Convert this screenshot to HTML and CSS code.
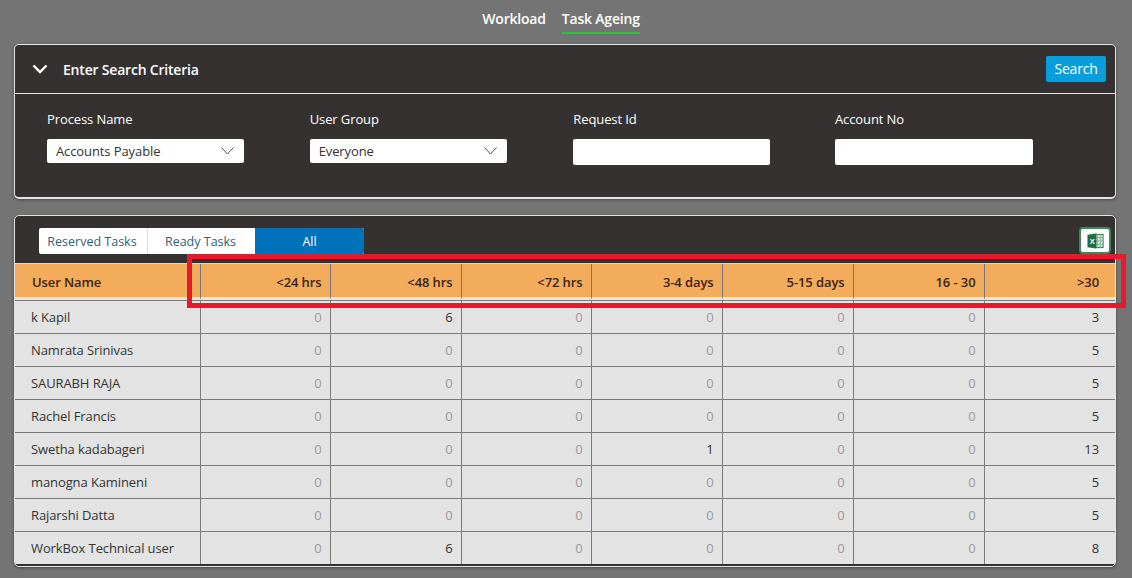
FILE: index.html
```html
<!DOCTYPE html>
<html lang="en">
<head>
  <meta charset="UTF-8">
  <title>Task Ageing</title>
  <link rel="stylesheet" href="styles.css">
</head>
<body>
<div class="page">
  <!-- top tabs -->
  <nav class="top-tabs">
    <a class="top-tab">Workload</a>
    <a class="top-tab active">Task Ageing</a>
  </nav>

  <!-- search panel -->
  <section class="panel search-panel">
    <div class="search-head">
      <svg class="collapse-icon" width="16" height="10" viewBox="0 0 16 10"><path d="M1.5 1.5 L8 8 L14.5 1.5" fill="none" stroke="#fff" stroke-width="2.4"/></svg>
      <h2>Enter Search Criteria</h2>
      <button class="search-btn">Search</button>
    </div>
    <div class="search-fields">
      <div class="field">
        <label>Process Name</label>
        <div class="select">Accounts Payable
          <svg width="13" height="8" viewBox="0 0 13 8"><path d="M0.5 0.5 L6.5 7 L12.5 0.5" fill="none" stroke="#555" stroke-width="1"/></svg>
        </div>
      </div>
      <div class="field">
        <label>User Group</label>
        <div class="select">Everyone
          <svg width="13" height="8" viewBox="0 0 13 8"><path d="M0.5 0.5 L6.5 7 L12.5 0.5" fill="none" stroke="#555" stroke-width="1"/></svg>
        </div>
      </div>
      <div class="field">
        <label>Request Id</label>
        <input type="text" class="text-input">
      </div>
      <div class="field">
        <label>Account No</label>
        <input type="text" class="text-input">
      </div>
    </div>
  </section>

  <!-- results -->
  <section class="panel result-panel">
    <div class="toolbar">
      <div class="seg">
        <span class="seg-item">Reserved Tasks</span>
        <span class="seg-item">Ready Tasks</span>
        <span class="seg-item selected">All</span>
      </div>
      <button class="excel-btn">
        <svg width="17" height="18" viewBox="0 0 18 18">
          <rect x="7" y="2" width="10" height="14" fill="#dfeee5" stroke="#1d6f42" stroke-width="1"/>
          <path d="M11 2v14M14 2v14M7 5.5h10M7 9h10M7 12.5h10" stroke="#7fae94" stroke-width="1"/>
          <path d="M0.5 2.5 L10 1 V17 L0.5 15.5 Z" fill="#1d6f42"/>
          <text x="2.8" y="12" class="excel-x">X</text>
        </svg>
      </button>
    </div>
    <table class="grid">
      <colgroup>
        <col class="col-name">
        <col class="col-a"><col class="col-b"><col class="col-a"><col class="col-b"><col class="col-b"><col class="col-b"><col class="col-b">
      </colgroup>
      <thead>
        <tr>
          <th class="name">User Name</th>
          <th>&lt;24 hrs</th><th>&lt;48 hrs</th><th>&lt;72 hrs</th><th>3-4 days</th><th>5-15 days</th><th>16 - 30</th><th>&gt;30</th>
        </tr>
      </thead>
      <tbody>
        <tr><td class="name">k Kapil</td><td>0</td><td class="hit">6</td><td>0</td><td>0</td><td>0</td><td>0</td><td class="hit">3</td></tr>
        <tr><td class="name">Namrata Srinivas</td><td>0</td><td>0</td><td>0</td><td>0</td><td>0</td><td>0</td><td class="hit">5</td></tr>
        <tr><td class="name">SAURABH RAJA</td><td>0</td><td>0</td><td>0</td><td>0</td><td>0</td><td>0</td><td class="hit">5</td></tr>
        <tr><td class="name">Rachel Francis</td><td>0</td><td>0</td><td>0</td><td>0</td><td>0</td><td>0</td><td class="hit">5</td></tr>
        <tr><td class="name">Swetha kadabageri</td><td>0</td><td>0</td><td>0</td><td class="hit">1</td><td>0</td><td>0</td><td class="hit">13</td></tr>
        <tr><td class="name">manogna Kamineni</td><td>0</td><td>0</td><td>0</td><td>0</td><td>0</td><td>0</td><td class="hit">5</td></tr>
        <tr><td class="name">Rajarshi Datta</td><td>0</td><td>0</td><td>0</td><td>0</td><td>0</td><td>0</td><td class="hit">5</td></tr>
        <tr><td class="name">WorkBox Technical user</td><td>0</td><td class="hit">6</td><td>0</td><td>0</td><td>0</td><td>0</td><td class="hit">8</td></tr>
      </tbody>
    </table>
  </section>

  <!-- red annotation over the header columns -->
  <div class="red-box"></div>
</div>
</body>
</html>
```

FILE: styles.css
```css
html, body {
  margin: 0;
  padding: 0;
  height: 100%;
}
body {
  background-color: #747474;
  font-family: "Open Sans", Arial, sans-serif;
  overflow: hidden;
}
.page {
  position: relative;
  width: 1132px;
  height: 578px;
  padding: 0 16px 0 14px;
  box-sizing: border-box;
}

/* top tabs */
.top-tabs {
  display: flex;
  justify-content: center;
  gap: 16px;
  height: 44px;
  padding-top: 10px;
  padding-right: 8px;
  box-sizing: border-box;
}
.top-tab {
  height: 24px;
  line-height: 18px;
  font-size: 14px;
  font-weight: 600;
  letter-spacing: -0.2px;
  color: #fff;
  box-sizing: border-box;
}
.top-tab.active {
  border-bottom: 2px solid #2dc043;
}

/* panels */
.panel {
  background-color: #353131;
  border: 1px solid #e4e4e4;
  border-radius: 5px;
  box-shadow: 0 1px 3px rgba(0,0,0,0.4);
}
.search-panel {
  height: 155px;
  border-bottom-width: 2px;
  box-sizing: border-box;
}
.search-head {
  display: flex;
  align-items: center;
  height: 48px;
  padding: 0 9px 0 17px;
  border-bottom: 1px solid #e4e4e4;
}
.collapse-icon {
  margin-right: 15px;
  margin-top: -1px;
}
.search-head h2 {
  margin: 0;
  flex: 1;
  font-size: 14px;
  font-weight: 600;
  letter-spacing: -0.2px;
  color: #fff;
}
.search-btn {
  width: 60px;
  height: 26px;
  margin-top: -1px;
  border: none;
  border-radius: 2px;
  background-color: #0a9ddc;
  color: #fff;
  font-family: inherit;
  font-size: 14px;
  letter-spacing: -0.2px;
  padding: 0;
}
.search-fields {
  display: flex;
  padding: 16px 0 0 32px;
}
.field {
  width: 262.67px;
}
.field:nth-child(3) {
  padding-left: 1px;
  width: 261.67px;
}
.field label {
  display: block;
  height: 18px;
  line-height: 18px;
  margin-bottom: 11px;
  font-size: 13px;
  letter-spacing: -0.1px;
  color: #fff;
}
.select {
  display: flex;
  align-items: center;
  justify-content: space-between;
  width: 197px;
  height: 24px;
  padding: 0 10px 0 9px;
  margin-top: 1px;
  box-sizing: border-box;
  background-color: #fff;
  border-radius: 2px;
  font-size: 13px;
  letter-spacing: -0.1px;
  color: #333;
}
.text-input {
  display: block;
  width: 197px;
  height: 26px;
  box-sizing: border-box;
  background-color: #fff;
  border: none;
  border-radius: 2px;
}
.field:nth-child(4) .text-input {
  width: 198px;
}

/* results */
.result-panel {
  height: 352px;
  margin-top: 16px;
  box-sizing: border-box;
  overflow: hidden;
  width: 1102px;
}
.toolbar {
  display: flex;
  justify-content: space-between;
  align-items: flex-start;
  height: 48px;
  padding: 12px 4px 0 24px;
  box-sizing: border-box;
  border-bottom: 1px solid #d9d9d9;
}
.seg {
  display: flex;
  height: 26px;
  font-size: 12.5px;
  line-height: 27px;
  text-align: center;
  background-color: #fff;
  border-radius: 2px;
  overflow: hidden;
}
.seg-item {
  color: #2f6278;
  box-sizing: border-box;
}
.seg-item:nth-child(1) {
  width: 109px;
  padding-right: 2px;
  border-right: 1px solid #ddd;
}
.seg-item:nth-child(2) {
  width: 107px;
  padding-right: 2px;
}
.seg-item.selected {
  width: 109px;
  background-color: #0072bc;
  color: #fff;
}
.excel-btn {
  width: 32px;
  height: 27px;
  margin-top: -1px;
  padding: 0;
  display: flex;
  align-items: center;
  justify-content: center;
  background-color: #fff;
  border: 2px solid #3a8a5c;
  border-radius: 4px;
}
.excel-x {
  font-family: "Liberation Sans", Arial, sans-serif;
  font-size: 8px;
  font-weight: 700;
  fill: #fff;
}

/* table */
.grid {
  width: 1100px;
  table-layout: fixed;
  border-collapse: separate;
  border-spacing: 0;
  font-size: 13px;
  letter-spacing: -0.1px;
}
.col-name { width: 186px; }
.col-a { width: 130px; }
.col-b { width: 131px; }
.grid th {
  height: 36px;
  padding: 2px 8.5px 0 0;
  box-sizing: border-box;
  background-color: #f3ac5c;
  border-right: 1px solid #777;
  border-bottom: 3px solid #e6e6e6;
  color: #3a2410;
  font-weight: 600;
  font-size: 13px;
  text-align: right;
}
.grid td {
  height: 32px;
  padding: 0 8.5px 0 0;
  background-color: #e3e3e3;
  border-top: 1px solid #7a7a7a;
  border-right: 1px solid #7a7a7a;
  color: #9a9a9a;
  text-align: right;
}
.grid th:last-child, .grid td:last-child {
  border-right: none;
  padding-right: 17px;
}
.grid .name {
  padding-left: 16px;
  text-align: left;
  color: #333;
}
.grid th.name {
  padding-left: 17px;
  color: #3a2410;
}
.grid td.hit {
  color: #333;
}

/* annotation */
.red-box {
  position: absolute;
  left: 187px;
  top: 254px;
  width: 939px;
  height: 54px;
  box-sizing: border-box;
  border: 5px solid #e8192c;
}
```
